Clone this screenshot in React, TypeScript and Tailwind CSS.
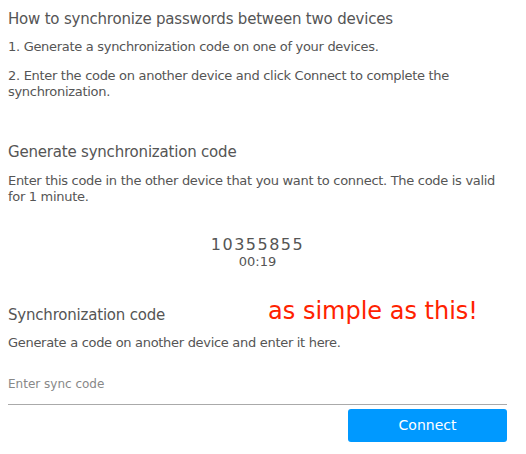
export default function App() {
  return (
    <div className="w-[526px] h-[454px] bg-white text-[#555] font-['DejaVu_Sans',sans-serif] pl-2 pr-[19px]">
      <h1 className="text-[15px] leading-[20px] tracking-[-0.2px] pt-[9px]">How to synchronize passwords between two devices</h1>
      <p className="text-[13px] leading-[16px] tracking-[-0.3px] mt-[10px]">1. Generate a synchronization code on one of your devices.</p>
      <p className="text-[13px] leading-[16px] tracking-[-0.3px] mt-[13px]">
        2. Enter the code on another device and click Connect to complete the synchronization.
      </p>

      <h2 className="text-[15px] leading-[20px] tracking-[-0.2px] mt-[42px]">Generate synchronization code</h2>
      <p className="text-[13px] leading-[16px] tracking-[-0.3px] mt-[11px]">
        Enter this code in the other device that you want to connect. The code is valid for 1 minute.
      </p>
      <div className="flex flex-col items-center mt-[31px]">
        <div className="text-[16px] leading-[18px] tracking-[1.5px]">10355855</div>
        <div className="text-[13px] leading-[16px]">00:19</div>
      </div>

      <div className="flex items-end mt-[27px]">
        <h2 className="text-[15px] leading-[20px] tracking-[-0.2px]">Synchronization code</h2>
        <span className="ml-auto mr-[29px] text-[24px] leading-[28px] text-[#ff2200]">as simple as this!</span>
      </div>
      <p className="text-[13px] leading-[16px] tracking-[-0.3px] mt-[10px]">Generate a code on another device and enter it here.</p>
      <input
        className="block w-full text-[12px] leading-[16px] mt-[25px] pb-[12px] border-b border-[#aaa] outline-none placeholder:text-[#888] text-[#555]"
        placeholder="Enter sync code"
      />
      <div className="flex justify-end mt-[4px]">
        <button className="w-[159px] h-[33px] rounded-[3px] bg-[#0099ff] text-white text-[14px]">Connect</button>
      </div>
    </div>
  );
}
